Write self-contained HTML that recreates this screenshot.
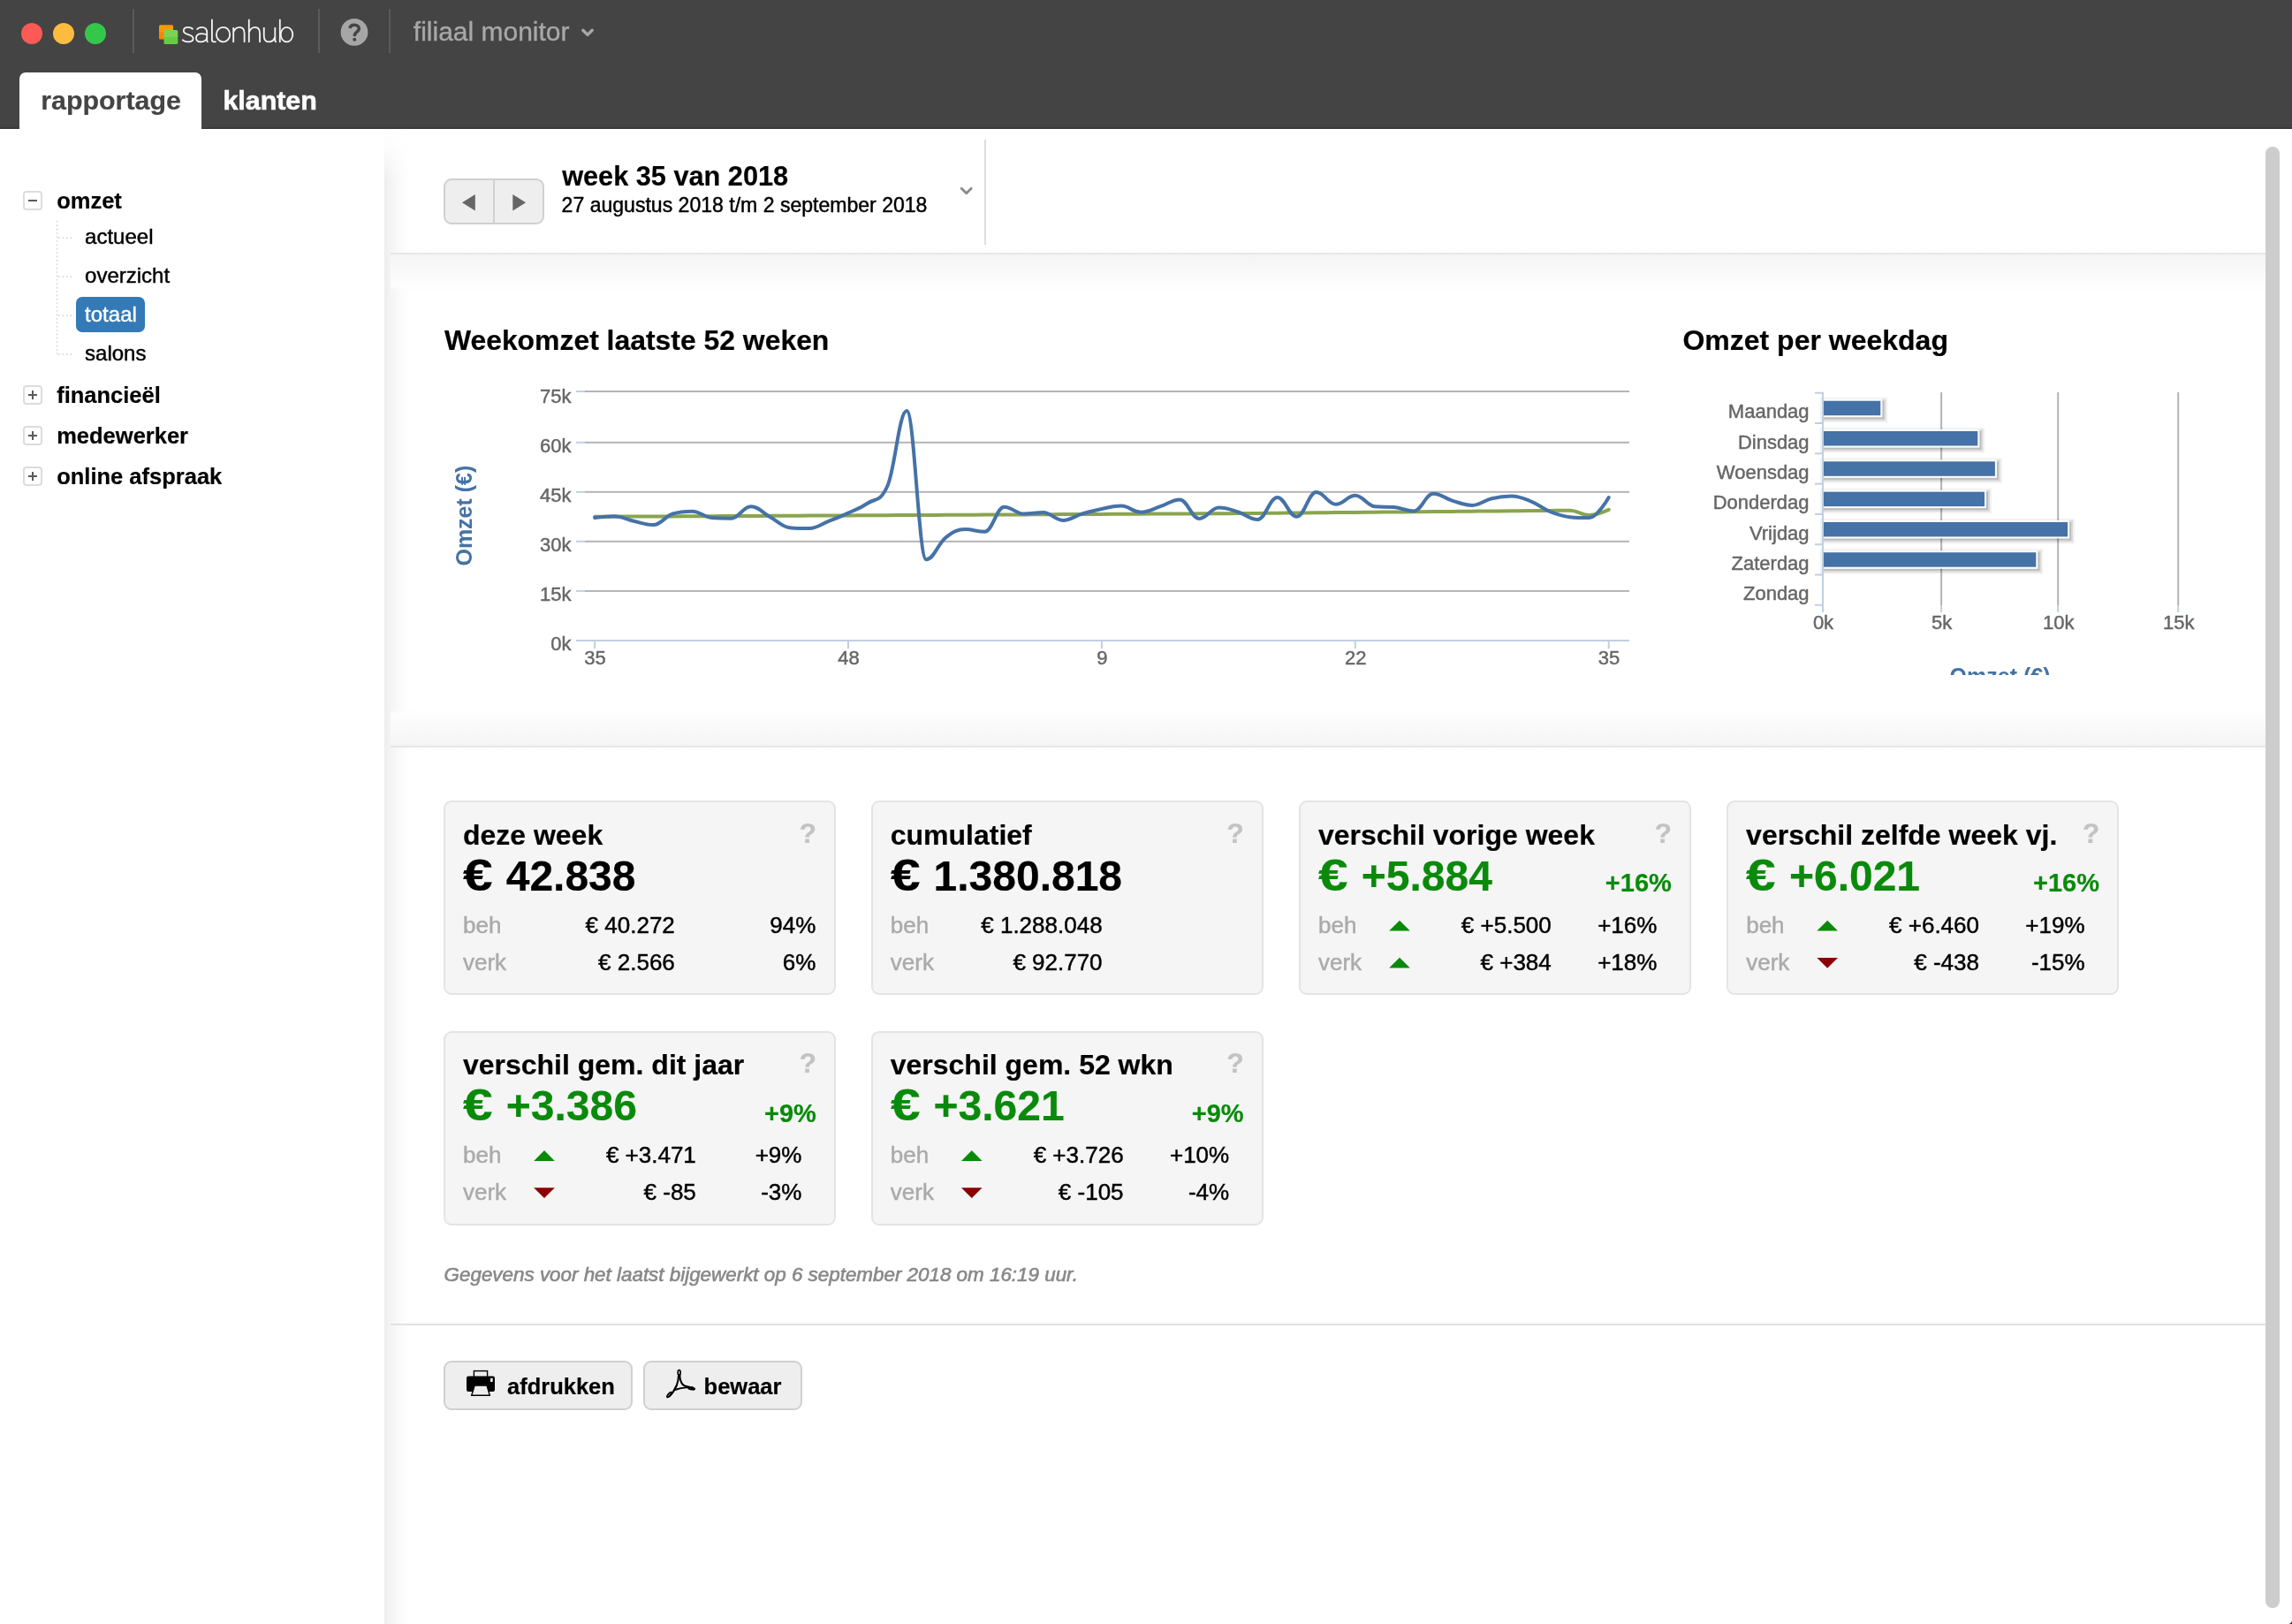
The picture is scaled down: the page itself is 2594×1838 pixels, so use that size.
<!DOCTYPE html>
<html lang="nl"><head><meta charset="utf-8"><title>salonhub - filiaal monitor</title>
<style>
html,body{margin:0;padding:0;}
body{width:2594px;height:1838px;position:relative;overflow:hidden;background:#fff;font-family:"Liberation Sans", sans-serif;}
.t{position:absolute;white-space:nowrap;margin:0;padding:0;}
svg{position:absolute;left:0;top:0;overflow:visible;}
svg text{font-family:"Liberation Sans", sans-serif;}
.card{position:absolute;width:440px;height:216px;background:#f5f5f5;border:2px solid #e4e4e4;border-radius:9px;}
.btn{position:absolute;background:#eee;border:2px solid #d0d0d0;border-radius:9px;box-sizing:border-box;}
#all{position:absolute;left:0;top:0;width:2594px;height:1838px;will-change:transform;}
</style></head><body><div id="all">
<div style="position:absolute;left:0px;top:0px;width:2594px;height:146px;background:#444;"></div>
<div style="position:absolute;left:0px;top:144px;width:2594px;height:2px;background:#3b3b3b;"></div>
<div style="position:absolute;left:24px;top:26px;width:24px;height:24px;border-radius:50%;background:#fd5956;"></div>
<div style="position:absolute;left:60px;top:26px;width:24px;height:24px;border-radius:50%;background:#fdbc40;"></div>
<div style="position:absolute;left:96px;top:26px;width:24px;height:24px;border-radius:50%;background:#34c84a;"></div>
<div style="position:absolute;left:150px;top:10px;width:2px;height:50px;background:#5a5a5a;"></div>
<div style="position:absolute;left:360px;top:10px;width:2px;height:50px;background:#5a5a5a;"></div>
<div style="position:absolute;left:440px;top:10px;width:2px;height:50px;background:#5a5a5a;"></div>
<svg width="2594" height="146" viewBox="0 0 2594 146">
<defs><linearGradient id="og" x1="0" y1="0" x2="0" y2="1"><stop offset="0" stop-color="#ff9a05"/><stop offset=".5" stop-color="#ff9a05"/><stop offset=".5" stop-color="#ff8500"/><stop offset="1" stop-color="#ff8500"/></linearGradient>
<linearGradient id="gg" x1="0" y1="0" x2="0" y2="1"><stop offset="0" stop-color="#7bd354"/><stop offset=".5" stop-color="#7bd354"/><stop offset=".5" stop-color="#66cc44"/><stop offset="1" stop-color="#66cc44"/></linearGradient></defs>
<rect x="180" y="28.2" width="16" height="16.4" rx="1.6" fill="url(#og)"/>
<rect x="185.5" y="34" width="15.8" height="16" rx="1.6" fill="url(#gg)"/>
<g fill="none" stroke="#f4f4f4" stroke-width="1.8" stroke-linecap="butt" stroke-linejoin="round">
<path d="M218.4,33.3 C217.2,31.6 215.2,30.8 212.8,30.8 C209.8,30.8 207.8,32.4 207.8,34.8 C207.8,37.4 210,38.3 213,39.2 C216.4,40.2 218.6,41.2 218.6,43.6 C218.6,46 216.2,47.4 213,47.4 C210,47.4 207.6,46.4 206.3,44.8"/>
<path d="M222.6,33.5 C224,31.8 226,30.8 228.4,30.8 C232,30.8 234.2,33 234.2,36.6 V46 C234.2,47 234.7,47.4 235.6,47.4"/>
<path d="M234.2,39.6 C232.6,38.6 230.6,38.1 228.4,38.1 C224.6,38.1 222,40 222,43 C222,45.8 224.2,47.4 227.2,47.4 C230.6,47.4 234.2,45.4 234.2,42.2"/>
<path d="M239.9,21.8 V45 C239.9,46.8 240.8,47.4 242.4,47.4 C243.2,47.4 244,47.3 244.6,47.1"/>
<ellipse cx="252.55" cy="39.1" rx="7.65" ry="8.3"/>
<path d="M264.2,30.9 V48.05 M264.2,36.4 C265.4,33 268,30.8 271.2,30.8 C274.8,30.8 276.6,33.4 276.6,37.8 V48.05"/>
<path d="M281.8,21.8 V48.05 M281.8,36.8 C283,33.2 285.6,30.8 288.8,30.8 C292.4,30.8 294.05,33.4 294.05,37.8 V48.05"/>
<path d="M298.75,30.9 V40.6 C298.75,44.8 300.6,47.4 304.2,47.4 C307.6,47.4 310.2,45 311.3,41.6 M311.3,30.9 V45.8 C311.3,46.9 311.9,47.4 312.9,47.4"/>
<path d="M316.8,21.8 V48.05"/><ellipse cx="324.5" cy="39.1" rx="6.8" ry="8.3"/>
</g>
<circle cx="401" cy="36.4" r="15.4" fill="#a6a6a6"/>
<path d="M396,31.9 C396.3,29.6 398.4,28.3 401,28.3 C404.2,28.3 406.3,30 406.3,32.3 C406.3,34.2 405.2,35.3 403.6,36.4 C402,37.5 401.3,38.5 401.3,41" fill="none" stroke="#444" stroke-width="3.5"/>
<circle cx="401.25" cy="44.7" r="2" fill="#444"/>
<path d="M659.8,34.2 L665,39.4 L670.2,34.2" fill="none" stroke="#a8a8a8" stroke-width="3.4" stroke-linecap="round" stroke-linejoin="round"/>
</svg>
<div class="t" style="left:467.80px;top:21px;font-size:30px;line-height:30px;font-weight:normal;color:#a8a8a8;font-style:normal;-webkit-text-stroke:.35px #a8a8a8;">filiaal monitor</div>
<div style="position:absolute;left:22px;top:82px;width:206px;height:66px;background:#fff;border-radius:7px 7px 0 0;"></div>
<div class="t" style="left:46.20px;top:98px;font-size:30.4px;line-height:31px;font-weight:bold;color:#444;font-style:normal;-webkit-text-stroke:.2px;">rapportage</div>
<div class="t" style="left:252.40px;top:98px;font-size:30.4px;line-height:31px;font-weight:bold;color:#fff;font-style:normal;-webkit-text-stroke:.6px;">klanten</div>
<div style="position:absolute;left:26px;top:216.3px;width:17.5px;height:17.5px;border:2px solid #dcdcdc;border-radius:4px;background:#fff;"></div>
<div style="position:absolute;left:31.5px;top:226.3px;width:10.5px;height:1.5px;background:#5a5a5a;"></div>
<div class="t" style="left:64.20px;top:214px;font-size:25.5px;line-height:26px;font-weight:bold;color:#000;font-style:normal;-webkit-text-stroke:.2px;">omzet</div>
<div style="position:absolute;left:26px;top:436.3px;width:17.5px;height:17.5px;border:2px solid #dcdcdc;border-radius:4px;background:#fff;"></div>
<div style="position:absolute;left:31.5px;top:446.3px;width:10.5px;height:1.5px;background:#5a5a5a;"></div>
<div style="position:absolute;left:36.0px;top:441.8px;width:1.5px;height:10.5px;background:#5a5a5a;"></div>
<div class="t" style="left:64.20px;top:434px;font-size:25.5px;line-height:26px;font-weight:bold;color:#000;font-style:normal;-webkit-text-stroke:.2px;">financieël</div>
<div style="position:absolute;left:26px;top:482px;width:17.5px;height:17.5px;border:2px solid #dcdcdc;border-radius:4px;background:#fff;"></div>
<div style="position:absolute;left:31.5px;top:492.0px;width:10.5px;height:1.5px;background:#5a5a5a;"></div>
<div style="position:absolute;left:36.0px;top:487.5px;width:1.5px;height:10.5px;background:#5a5a5a;"></div>
<div class="t" style="left:64.20px;top:480px;font-size:25.5px;line-height:26px;font-weight:bold;color:#000;font-style:normal;-webkit-text-stroke:.2px;">medewerker</div>
<div style="position:absolute;left:26px;top:528.1px;width:17.5px;height:17.5px;border:2px solid #dcdcdc;border-radius:4px;background:#fff;"></div>
<div style="position:absolute;left:31.5px;top:538.1px;width:10.5px;height:1.5px;background:#5a5a5a;"></div>
<div style="position:absolute;left:36.0px;top:533.6px;width:1.5px;height:10.5px;background:#5a5a5a;"></div>
<div class="t" style="left:64.20px;top:526px;font-size:25.5px;line-height:26px;font-weight:bold;color:#000;font-style:normal;-webkit-text-stroke:.2px;">online afspraak</div>
<svg width="440" height="600" viewBox="0 0 440 600"><g stroke="#cfcfcf" stroke-width="1.4" stroke-dasharray="1.6 2.8" fill="none">
<path d="M64.5,250 V401"/>
<path d="M66.2,269.2 H82.5"/>
<path d="M66.2,313.2 H82.5"/>
<path d="M66.2,357.2 H82.5"/>
<path d="M66.2,401 H82.5"/>
</g></svg>
<div style="position:absolute;left:86px;top:336px;width:78px;height:40px;background:#337ab7;border-radius:7px;"></div>
<div class="t" style="left:96.10px;top:256px;font-size:24px;line-height:24px;font-weight:normal;color:#000;font-style:normal;-webkit-text-stroke:.45px;">actueel</div>
<div class="t" style="left:96.10px;top:300px;font-size:24px;line-height:24px;font-weight:normal;color:#000;font-style:normal;-webkit-text-stroke:.45px;">overzicht</div>
<div class="t" style="left:96.10px;top:344px;font-size:24px;line-height:24px;font-weight:normal;color:#fff;font-style:normal;-webkit-text-stroke:.4px #fff;">totaal</div>
<div class="t" style="left:96.10px;top:388px;font-size:24px;line-height:24px;font-weight:normal;color:#000;font-style:normal;-webkit-text-stroke:.45px;">salons</div>
<div style="position:absolute;left:435px;top:146px;width:30px;height:1692px;background:linear-gradient(to right,#ededed 0,#f3f3f3 20%,#f9f9f9 50%,#fdfdfd 80%,#fff 100%);"></div>
<div style="position:absolute;left:435px;top:146px;width:30px;height:60px;background:linear-gradient(to bottom,#fff 0,rgba(255,255,255,.85) 30%,rgba(255,255,255,0) 100%);"></div>
<div style="position:absolute;left:442px;top:288px;width:2122px;height:556px;background:linear-gradient(to bottom,#f4f4f4 0,#f9f9f9 18px,#fdfdfd 34px,rgba(255,255,255,0) 42px,rgba(255,255,255,0) 514px,#fdfdfd 522px,#f9f9f9 538px,#f4f4f4 556px);"></div>
<div style="position:absolute;left:442px;top:286px;width:2122px;height:2px;background:#e6e6e6;"></div>
<div style="position:absolute;left:442px;top:844px;width:2122px;height:2px;background:#e6e6e6;"></div>
<div style="position:absolute;left:442px;top:1498px;width:2122px;height:2px;background:#e2e2e2;"></div>
<div style="position:absolute;left:502px;top:202px;width:113.5px;height:52px;background:#eee;border:2px solid #d0d0d0;border-radius:9px;box-sizing:border-box;"></div>
<div style="position:absolute;left:558px;top:204px;width:2px;height:48px;background:#d0d0d0;"></div>
<svg width="2594" height="300" viewBox="0 0 2594 300">
<path d="M537.8,220 V238.4 L523,229.2 Z" fill="#666"/>
<path d="M580.3,220 V238.4 L595.1,229.2 Z" fill="#666"/>
<path d="M1088.2,213.2 L1093.7,218.7 L1099.2,213.2" fill="none" stroke="#8a8a8a" stroke-width="2.8" stroke-linecap="round" stroke-linejoin="round"/>
</svg>
<div class="t" style="left:636.20px;top:184px;font-size:30.7px;line-height:31px;font-weight:bold;color:#000;font-style:normal;-webkit-text-stroke:.2px;">week 35 van 2018</div>
<div class="t" style="left:635.60px;top:220px;font-size:23.05px;line-height:24px;font-weight:normal;color:#000;font-style:normal;-webkit-text-stroke:.45px;">27 augustus 2018 t/m 2 september 2018</div>
<div style="position:absolute;left:1114px;top:158px;width:2px;height:119px;background:#dedede;"></div>
<div class="t" style="left:502.90px;top:369px;font-size:31.9px;line-height:32px;font-weight:bold;color:#000;font-style:normal;-webkit-text-stroke:.2px;">Weekomzet laatste 52 weken</div>
<div class="t" style="left:1904.40px;top:369px;font-size:32px;line-height:32px;font-weight:bold;color:#000;font-style:normal;-webkit-text-stroke:.2px;">Omzet per weekdag</div>
<svg width="2594" height="1838" viewBox="0 0 2594 1838">
<rect x="662" y="442.0" width="1182" height="2" fill="#b4b4b4"/>
<rect x="652" y="442.0" width="10" height="2" fill="#c0d0e0"/>
<rect x="662" y="499.8" width="1182" height="2" fill="#b4b4b4"/>
<rect x="652" y="499.8" width="10" height="2" fill="#c0d0e0"/>
<rect x="662" y="555.8" width="1182" height="2" fill="#b4b4b4"/>
<rect x="652" y="555.8" width="10" height="2" fill="#c0d0e0"/>
<rect x="662" y="611.8" width="1182" height="2" fill="#b4b4b4"/>
<rect x="652" y="611.8" width="10" height="2" fill="#c0d0e0"/>
<rect x="662" y="667.9" width="1182" height="2" fill="#b4b4b4"/>
<rect x="652" y="667.9" width="10" height="2" fill="#c0d0e0"/>
<rect x="652" y="724" width="1192" height="2" fill="#c0d0e0"/>
<rect x="672.1" y="726" width="2" height="8" fill="#c0d0e0"/>
<rect x="959.0" y="726" width="2" height="8" fill="#c0d0e0"/>
<rect x="1245.9" y="726" width="2" height="8" fill="#c0d0e0"/>
<rect x="1532.8" y="726" width="2" height="8" fill="#c0d0e0"/>
<rect x="1819.7" y="726" width="2" height="8" fill="#c0d0e0"/>
<path d="M673.1,584.8 C673.1,584.8 686.3,584.7 695.2,584.7 C704.0,584.6 708.4,584.6 717.2,584.6 C726.1,584.5 730.5,584.5 739.3,584.5 C748.1,584.4 752.6,584.4 761.4,584.4 C770.2,584.3 774.6,584.3 783.5,584.3 C792.3,584.2 796.7,584.2 805.5,584.2 C814.3,584.1 818.8,584.1 827.6,584.0 C836.4,584.0 840.8,584.0 849.7,583.9 C858.5,583.9 862.9,583.9 871.7,583.8 C880.6,583.8 885.0,583.8 893.8,583.7 C902.6,583.7 907.0,583.7 915.9,583.6 C924.7,583.6 929.1,583.6 937.9,583.5 C946.8,583.5 951.2,583.4 960.0,583.4 C968.8,583.4 973.3,583.3 982.1,583.3 C990.9,583.2 995.3,583.2 1004.2,583.2 C1013.0,583.1 1017.4,583.1 1026.2,583.1 C1035.0,583.0 1039.5,583.0 1048.3,582.9 C1057.1,582.9 1061.5,582.9 1070.4,582.8 C1079.2,582.8 1083.6,582.8 1092.4,582.7 C1101.3,582.7 1105.7,582.6 1114.5,582.6 C1123.3,582.5 1127.7,582.5 1136.6,582.5 C1145.4,582.4 1149.8,582.4 1158.6,582.4 C1167.5,582.3 1171.9,582.3 1180.7,582.2 C1189.5,582.2 1194.0,582.2 1202.8,582.1 C1211.6,582.1 1216.0,582.1 1224.8,582.0 C1233.7,582.0 1238.1,581.9 1246.9,581.9 C1255.7,581.9 1260.2,581.8 1269.0,581.8 C1277.8,581.7 1282.2,581.7 1291.1,581.7 C1299.9,581.6 1304.3,581.6 1313.1,581.6 C1322.0,581.5 1326.4,581.5 1335.2,581.4 C1344.0,581.4 1348.4,581.4 1357.3,581.3 C1366.1,581.3 1370.5,581.3 1379.3,581.2 C1388.2,581.2 1392.6,581.2 1401.4,581.1 C1410.2,581.0 1414.7,581.0 1423.5,580.9 C1432.3,580.8 1436.7,580.8 1445.6,580.7 C1454.4,580.6 1458.8,580.6 1467.6,580.5 C1476.4,580.4 1480.9,580.4 1489.7,580.3 C1498.5,580.2 1502.9,580.2 1511.8,580.1 C1520.6,580.0 1525.0,580.0 1533.8,579.9 C1542.7,579.8 1547.1,579.8 1555.9,579.7 C1564.7,579.6 1569.1,579.6 1578.0,579.5 C1586.8,579.4 1591.2,579.4 1600.0,579.3 C1608.9,579.2 1613.3,579.1 1622.1,579.1 C1630.9,579.0 1635.4,578.9 1644.2,578.9 C1653.0,578.8 1657.4,578.7 1666.2,578.7 C1675.1,578.6 1679.5,578.5 1688.3,578.5 C1697.1,578.4 1701.6,578.3 1710.4,578.3 C1719.2,578.2 1723.6,578.1 1732.5,578.1 C1741.3,578.0 1745.7,577.9 1754.5,577.9 C1763.4,577.8 1767.8,577.7 1776.6,577.7 C1785.4,577.7 1789.8,583.0 1798.7,583.0 C1807.5,583.0 1820.7,576.9 1820.7,576.9" fill="none" stroke="#89a54e" stroke-width="4" stroke-linejoin="round" stroke-linecap="round"/>
<path d="M673.1,586.1 C673.1,586.1 686.3,584.3 695.2,584.3 C704.0,584.3 708.4,587.8 717.2,589.8 C726.1,591.8 730.5,594.1 739.3,594.1 C748.1,594.1 752.6,584.3 761.4,581.5 C770.2,578.7 774.6,578.7 783.5,578.7 C792.3,578.7 796.7,585.5 805.5,586.1 C814.3,586.7 818.8,586.7 827.6,586.7 C836.4,586.7 840.8,573.2 849.7,573.2 C858.5,573.2 862.9,580.4 871.7,585.2 C880.6,590.0 885.0,596.3 893.8,597.2 C902.6,598.1 907.0,598.1 915.9,598.1 C924.7,598.1 929.1,593.3 937.9,589.8 C946.8,586.3 951.2,584.7 960.0,580.6 C968.8,576.5 973.3,575.5 982.1,569.5 C990.9,563.5 995.3,569.5 1004.2,550.5 C1013.0,531.5 1017.4,465.1 1026.2,465.1 C1035.0,465.1 1039.5,633.2 1048.3,633.2 C1057.1,633.2 1061.5,615.1 1070.4,608.3 C1079.2,601.5 1083.6,599.1 1092.4,599.1 C1101.3,599.1 1105.7,601.8 1114.5,601.8 C1123.3,601.8 1127.7,573.7 1136.6,573.7 C1145.4,573.7 1149.8,581.5 1158.6,581.5 C1167.5,581.5 1171.9,580.0 1180.7,580.0 C1189.5,580.0 1194.0,588.9 1202.8,588.9 C1211.6,588.9 1216.0,584.1 1224.8,581.5 C1233.7,578.9 1238.1,577.8 1246.9,576.0 C1255.7,574.2 1260.2,572.6 1269.0,572.6 C1277.8,572.6 1282.2,579.7 1291.1,579.7 C1299.9,579.7 1304.3,576.1 1313.1,573.2 C1322.0,570.3 1326.4,565.4 1335.2,565.4 C1344.0,565.4 1348.4,587.0 1357.3,587.0 C1366.1,587.0 1370.5,574.6 1379.3,574.6 C1388.2,574.6 1392.6,576.8 1401.4,579.5 C1410.2,582.2 1414.7,588.0 1423.5,588.0 C1432.3,588.0 1436.7,563.0 1445.6,563.0 C1454.4,563.0 1458.8,584.8 1467.6,584.8 C1476.4,584.8 1480.9,557.1 1489.7,557.1 C1498.5,557.1 1502.9,570.8 1511.8,570.8 C1520.6,570.8 1525.0,560.8 1533.8,560.8 C1542.7,560.8 1547.1,572.3 1555.9,573.2 C1564.7,574.1 1569.1,573.2 1578.0,574.1 C1586.8,575.0 1591.2,578.4 1600.0,578.4 C1608.9,578.4 1613.3,558.8 1622.1,558.8 C1630.9,558.8 1635.4,564.2 1644.2,566.8 C1653.0,569.4 1657.4,571.9 1666.2,571.9 C1675.1,571.9 1679.5,566.3 1688.3,564.2 C1697.1,562.1 1701.6,561.6 1710.4,561.6 C1719.2,561.6 1723.6,563.8 1732.5,567.3 C1741.3,570.8 1745.7,575.6 1754.5,579.2 C1763.4,582.8 1767.8,584.3 1776.6,585.2 C1785.4,586.1 1789.8,586.1 1798.7,586.1 C1807.5,586.1 1820.7,563.0 1820.7,563.0" fill="none" stroke="#4572a7" stroke-width="4" stroke-linejoin="round" stroke-linecap="round"/>
<text x="646.4" y="456.0" text-anchor="end" font-size="22" fill="#666" stroke="#666" stroke-width=".45">75k</text>
<text x="646.4" y="512.0" text-anchor="end" font-size="22" fill="#666" stroke="#666" stroke-width=".45">60k</text>
<text x="646.4" y="568.0" text-anchor="end" font-size="22" fill="#666" stroke="#666" stroke-width=".45">45k</text>
<text x="646.4" y="624.0" text-anchor="end" font-size="22" fill="#666" stroke="#666" stroke-width=".45">30k</text>
<text x="646.4" y="680.0" text-anchor="end" font-size="22" fill="#666" stroke="#666" stroke-width=".45">15k</text>
<text x="646.4" y="736.0" text-anchor="end" font-size="22" fill="#666" stroke="#666" stroke-width=".45">0k</text>
<text x="673.5" y="752.2" text-anchor="middle" font-size="22" fill="#666" stroke="#666" stroke-width=".45">35</text>
<text x="960.4" y="752.2" text-anchor="middle" font-size="22" fill="#666" stroke="#666" stroke-width=".45">48</text>
<text x="1247.3" y="752.2" text-anchor="middle" font-size="22" fill="#666" stroke="#666" stroke-width=".45">9</text>
<text x="1534.2" y="752.2" text-anchor="middle" font-size="22" fill="#666" stroke="#666" stroke-width=".45">22</text>
<text x="1821.1" y="752.2" text-anchor="middle" font-size="22" fill="#666" stroke="#666" stroke-width=".45">35</text>
<text transform="translate(533.8,583.6) rotate(-90)" text-anchor="middle" font-size="25" font-weight="bold" fill="#4572a7">Omzet (€)</text>
<rect x="2054" y="443.7" width="9" height="2" fill="#c0d0e0"/>
<rect x="2054" y="478.0" width="9" height="2" fill="#c0d0e0"/>
<rect x="2054" y="512.3" width="9" height="2" fill="#c0d0e0"/>
<rect x="2054" y="546.6" width="9" height="2" fill="#c0d0e0"/>
<rect x="2054" y="580.9" width="9" height="2" fill="#c0d0e0"/>
<rect x="2054" y="615.2" width="9" height="2" fill="#c0d0e0"/>
<rect x="2054" y="649.5" width="9" height="2" fill="#c0d0e0"/>
<rect x="2054" y="683.8" width="9" height="2" fill="#c0d0e0"/>
<rect x="2196.1" y="444" width="2" height="241" fill="#b4b4b4"/>
<rect x="2196.1" y="685" width="2" height="8" fill="#c0d0e0"/>
<rect x="2328.2" y="444" width="2" height="241" fill="#b4b4b4"/>
<rect x="2328.2" y="685" width="2" height="8" fill="#c0d0e0"/>
<rect x="2464.2" y="444" width="2" height="241" fill="#b4b4b4"/>
<rect x="2464.2" y="685" width="2" height="8" fill="#c0d0e0"/>
<rect x="2062" y="685" width="2" height="8" fill="#c0d0e0"/>
<rect x="2065" y="454.7" width="66.3" height="18.5" fill="none" stroke="#000" stroke-opacity="0.05" stroke-width="10"/>
<rect x="2065" y="454.7" width="66.3" height="18.5" fill="none" stroke="#000" stroke-opacity="0.1" stroke-width="6"/>
<rect x="2065" y="454.7" width="66.3" height="18.5" fill="none" stroke="#000" stroke-opacity="0.15" stroke-width="2"/>
<rect x="2063" y="452.7" width="66.3" height="18.5" fill="#4572a7" stroke="#fff" stroke-width="2"/>
<rect x="2065" y="489.0" width="176.3" height="18.5" fill="none" stroke="#000" stroke-opacity="0.05" stroke-width="10"/>
<rect x="2065" y="489.0" width="176.3" height="18.5" fill="none" stroke="#000" stroke-opacity="0.1" stroke-width="6"/>
<rect x="2065" y="489.0" width="176.3" height="18.5" fill="none" stroke="#000" stroke-opacity="0.15" stroke-width="2"/>
<rect x="2063" y="487.0" width="176.3" height="18.5" fill="#4572a7" stroke="#fff" stroke-width="2"/>
<rect x="2065" y="523.3" width="195.9" height="18.5" fill="none" stroke="#000" stroke-opacity="0.05" stroke-width="10"/>
<rect x="2065" y="523.3" width="195.9" height="18.5" fill="none" stroke="#000" stroke-opacity="0.1" stroke-width="6"/>
<rect x="2065" y="523.3" width="195.9" height="18.5" fill="none" stroke="#000" stroke-opacity="0.15" stroke-width="2"/>
<rect x="2063" y="521.3" width="195.9" height="18.5" fill="#4572a7" stroke="#fff" stroke-width="2"/>
<rect x="2065" y="557.6" width="184.0" height="18.5" fill="none" stroke="#000" stroke-opacity="0.05" stroke-width="10"/>
<rect x="2065" y="557.6" width="184.0" height="18.5" fill="none" stroke="#000" stroke-opacity="0.1" stroke-width="6"/>
<rect x="2065" y="557.6" width="184.0" height="18.5" fill="none" stroke="#000" stroke-opacity="0.15" stroke-width="2"/>
<rect x="2063" y="555.6" width="184.0" height="18.5" fill="#4572a7" stroke="#fff" stroke-width="2"/>
<rect x="2065" y="591.9" width="278.1" height="18.5" fill="none" stroke="#000" stroke-opacity="0.05" stroke-width="10"/>
<rect x="2065" y="591.9" width="278.1" height="18.5" fill="none" stroke="#000" stroke-opacity="0.1" stroke-width="6"/>
<rect x="2065" y="591.9" width="278.1" height="18.5" fill="none" stroke="#000" stroke-opacity="0.15" stroke-width="2"/>
<rect x="2063" y="589.9" width="278.1" height="18.5" fill="#4572a7" stroke="#fff" stroke-width="2"/>
<rect x="2065" y="626.2" width="242.3" height="18.5" fill="none" stroke="#000" stroke-opacity="0.05" stroke-width="10"/>
<rect x="2065" y="626.2" width="242.3" height="18.5" fill="none" stroke="#000" stroke-opacity="0.1" stroke-width="6"/>
<rect x="2065" y="626.2" width="242.3" height="18.5" fill="none" stroke="#000" stroke-opacity="0.15" stroke-width="2"/>
<rect x="2063" y="624.2" width="242.3" height="18.5" fill="#4572a7" stroke="#fff" stroke-width="2"/>
<rect x="2062" y="444" width="2" height="241" fill="#c0d0e0"/>
<text x="2047.6" y="473.4" text-anchor="end" font-size="22" fill="#666" stroke="#666" stroke-width=".45">Maandag</text>
<text x="2047.6" y="507.7" text-anchor="end" font-size="22" fill="#666" stroke="#666" stroke-width=".45">Dinsdag</text>
<text x="2047.6" y="542.0" text-anchor="end" font-size="22" fill="#666" stroke="#666" stroke-width=".45">Woensdag</text>
<text x="2047.6" y="576.3" text-anchor="end" font-size="22" fill="#666" stroke="#666" stroke-width=".45">Donderdag</text>
<text x="2047.6" y="610.6" text-anchor="end" font-size="22" fill="#666" stroke="#666" stroke-width=".45">Vrijdag</text>
<text x="2047.6" y="644.9" text-anchor="end" font-size="22" fill="#666" stroke="#666" stroke-width=".45">Zaterdag</text>
<text x="2047.6" y="679.2" text-anchor="end" font-size="22" fill="#666" stroke="#666" stroke-width=".45">Zondag</text>
<text x="2063.5" y="711.8" text-anchor="middle" font-size="22" fill="#666" stroke="#666" stroke-width=".45">0k</text>
<text x="2197.6" y="711.8" text-anchor="middle" font-size="22" fill="#666" stroke="#666" stroke-width=".45">5k</text>
<text x="2329.7" y="711.8" text-anchor="middle" font-size="22" fill="#666" stroke="#666" stroke-width=".45">10k</text>
<text x="2465.7" y="711.8" text-anchor="middle" font-size="22" fill="#666" stroke="#666" stroke-width=".45">15k</text>
<clipPath id="cl"><rect x="1900" y="740" width="660" height="24"/></clipPath>
<text x="2263.5" y="773.5" text-anchor="middle" font-size="25" font-weight="bold" fill="#4572a7" clip-path="url(#cl)">Omzet (€)</text>
</svg>
<div class="card" style="left:502.2px;top:906.3px;"></div>
<div class="t" style="left:523.90px;top:929px;font-size:32px;line-height:32px;font-weight:bold;color:#000;font-style:normal;-webkit-text-stroke:.2px;">deze week</div>
<div class="t" style="left:-276.00px;width:1200px;text-align:right;top:927px;font-size:32px;line-height:32px;font-weight:bold;color:#c3c3c3;font-style:normal;-webkit-text-stroke:.2px;">?</div>
<div class="t" style="left:524.20px;top:968px;font-size:48px;line-height:48px;font-weight:bold;color:#000;font-style:normal;-webkit-text-stroke:.2px;"><span style="display:inline-block;width:.733em;"><span style="display:inline-block;transform:scale(1.26,1.06);transform-origin:0 82%;">€</span></span> 42.838</div>
<div class="t" style="left:524.00px;top:1034px;font-size:26px;line-height:26px;font-weight:normal;color:#aaa;font-style:normal;-webkit-text-stroke:.45px;">beh</div>
<div class="t" style="left:-436.20px;width:1200px;text-align:right;top:1034px;font-size:26px;line-height:26px;font-weight:normal;color:#000;font-style:normal;-webkit-text-stroke:.45px;">€ 40.272</div>
<div class="t" style="left:-276.60px;width:1200px;text-align:right;top:1034px;font-size:26px;line-height:26px;font-weight:normal;color:#000;font-style:normal;-webkit-text-stroke:.45px;">94%</div>
<div class="t" style="left:524.00px;top:1076px;font-size:26px;line-height:26px;font-weight:normal;color:#aaa;font-style:normal;-webkit-text-stroke:.45px;">verk</div>
<div class="t" style="left:-436.20px;width:1200px;text-align:right;top:1076px;font-size:26px;line-height:26px;font-weight:normal;color:#000;font-style:normal;-webkit-text-stroke:.45px;">€ 2.566</div>
<div class="t" style="left:-276.60px;width:1200px;text-align:right;top:1076px;font-size:26px;line-height:26px;font-weight:normal;color:#000;font-style:normal;-webkit-text-stroke:.45px;">6%</div>
<div class="card" style="left:986.0px;top:906.3px;"></div>
<div class="t" style="left:1007.70px;top:929px;font-size:32px;line-height:32px;font-weight:bold;color:#000;font-style:normal;-webkit-text-stroke:.2px;">cumulatief</div>
<div class="t" style="left:207.80px;width:1200px;text-align:right;top:927px;font-size:32px;line-height:32px;font-weight:bold;color:#c3c3c3;font-style:normal;-webkit-text-stroke:.2px;">?</div>
<div class="t" style="left:1008.00px;top:968px;font-size:48px;line-height:48px;font-weight:bold;color:#000;font-style:normal;-webkit-text-stroke:.2px;"><span style="display:inline-block;width:.733em;"><span style="display:inline-block;transform:scale(1.26,1.06);transform-origin:0 82%;">€</span></span> 1.380.818</div>
<div class="t" style="left:1007.80px;top:1034px;font-size:26px;line-height:26px;font-weight:normal;color:#aaa;font-style:normal;-webkit-text-stroke:.45px;">beh</div>
<div class="t" style="left:47.60px;width:1200px;text-align:right;top:1034px;font-size:26px;line-height:26px;font-weight:normal;color:#000;font-style:normal;-webkit-text-stroke:.45px;">€ 1.288.048</div>
<div class="t" style="left:1007.80px;top:1076px;font-size:26px;line-height:26px;font-weight:normal;color:#aaa;font-style:normal;-webkit-text-stroke:.45px;">verk</div>
<div class="t" style="left:47.60px;width:1200px;text-align:right;top:1076px;font-size:26px;line-height:26px;font-weight:normal;color:#000;font-style:normal;-webkit-text-stroke:.45px;">€ 92.770</div>
<div class="card" style="left:1470.2px;top:906.3px;"></div>
<div class="t" style="left:1491.90px;top:929px;font-size:32px;line-height:32px;font-weight:bold;color:#000;font-style:normal;-webkit-text-stroke:.2px;">verschil vorige week</div>
<div class="t" style="left:692.00px;width:1200px;text-align:right;top:927px;font-size:32px;line-height:32px;font-weight:bold;color:#c3c3c3;font-style:normal;-webkit-text-stroke:.2px;">?</div>
<div class="t" style="left:1492.20px;top:968px;font-size:48px;line-height:48px;font-weight:bold;color:#0a8a0a;font-style:normal;-webkit-text-stroke:.2px;"><span style="display:inline-block;width:.733em;"><span style="display:inline-block;transform:scale(1.26,1.06);transform-origin:0 82%;">€</span></span> +5.884</div>
<div class="t" style="left:691.80px;width:1200px;text-align:right;top:985px;font-size:29px;line-height:29px;font-weight:bold;color:#0a8a0a;font-style:normal;-webkit-text-stroke:.2px;">+16%</div>
<div class="t" style="left:1492.00px;top:1034px;font-size:26px;line-height:26px;font-weight:normal;color:#aaa;font-style:normal;-webkit-text-stroke:.45px;">beh</div>
<div class="t" style="left:555.80px;width:1200px;text-align:right;top:1034px;font-size:26px;line-height:26px;font-weight:normal;color:#000;font-style:normal;-webkit-text-stroke:.45px;">€ +5.500</div>
<div class="t" style="left:675.40px;width:1200px;text-align:right;top:1034px;font-size:26px;line-height:26px;font-weight:normal;color:#000;font-style:normal;-webkit-text-stroke:.45px;">+16%</div>
<svg width="2594" height="1838"><path d="M1572.2,1053.6 L1595.8,1053.6 L1584.0,1041.8 Z" fill="#0a8a0a"/></svg>
<div class="t" style="left:1492.00px;top:1076px;font-size:26px;line-height:26px;font-weight:normal;color:#aaa;font-style:normal;-webkit-text-stroke:.45px;">verk</div>
<div class="t" style="left:555.80px;width:1200px;text-align:right;top:1076px;font-size:26px;line-height:26px;font-weight:normal;color:#000;font-style:normal;-webkit-text-stroke:.45px;">€ +384</div>
<div class="t" style="left:675.40px;width:1200px;text-align:right;top:1076px;font-size:26px;line-height:26px;font-weight:normal;color:#000;font-style:normal;-webkit-text-stroke:.45px;">+18%</div>
<svg width="2594" height="1838"><path d="M1572.2,1095.6 L1595.8,1095.6 L1584.0,1083.8 Z" fill="#0a8a0a"/></svg>
<div class="card" style="left:1954.4px;top:906.3px;"></div>
<div class="t" style="left:1976.10px;top:929px;font-size:32px;line-height:32px;font-weight:bold;color:#000;font-style:normal;-webkit-text-stroke:.2px;">verschil zelfde week vj.</div>
<div class="t" style="left:1176.20px;width:1200px;text-align:right;top:927px;font-size:32px;line-height:32px;font-weight:bold;color:#c3c3c3;font-style:normal;-webkit-text-stroke:.2px;">?</div>
<div class="t" style="left:1976.40px;top:968px;font-size:48px;line-height:48px;font-weight:bold;color:#0a8a0a;font-style:normal;-webkit-text-stroke:.2px;"><span style="display:inline-block;width:.733em;"><span style="display:inline-block;transform:scale(1.26,1.06);transform-origin:0 82%;">€</span></span> +6.021</div>
<div class="t" style="left:1176.00px;width:1200px;text-align:right;top:985px;font-size:29px;line-height:29px;font-weight:bold;color:#0a8a0a;font-style:normal;-webkit-text-stroke:.2px;">+16%</div>
<div class="t" style="left:1976.20px;top:1034px;font-size:26px;line-height:26px;font-weight:normal;color:#aaa;font-style:normal;-webkit-text-stroke:.45px;">beh</div>
<div class="t" style="left:1040.00px;width:1200px;text-align:right;top:1034px;font-size:26px;line-height:26px;font-weight:normal;color:#000;font-style:normal;-webkit-text-stroke:.45px;">€ +6.460</div>
<div class="t" style="left:1159.60px;width:1200px;text-align:right;top:1034px;font-size:26px;line-height:26px;font-weight:normal;color:#000;font-style:normal;-webkit-text-stroke:.45px;">+19%</div>
<svg width="2594" height="1838"><path d="M2056.4,1053.6 L2080.0,1053.6 L2068.2,1041.8 Z" fill="#0a8a0a"/></svg>
<div class="t" style="left:1976.20px;top:1076px;font-size:26px;line-height:26px;font-weight:normal;color:#aaa;font-style:normal;-webkit-text-stroke:.45px;">verk</div>
<div class="t" style="left:1040.00px;width:1200px;text-align:right;top:1076px;font-size:26px;line-height:26px;font-weight:normal;color:#000;font-style:normal;-webkit-text-stroke:.45px;">€ -438</div>
<div class="t" style="left:1159.60px;width:1200px;text-align:right;top:1076px;font-size:26px;line-height:26px;font-weight:normal;color:#000;font-style:normal;-webkit-text-stroke:.45px;">-15%</div>
<svg width="2594" height="1838"><path d="M2056.4,1083.9 L2080.0,1083.9 L2068.2,1095.7 Z" fill="#8b0000"/></svg>
<div class="card" style="left:502.2px;top:1166.6px;"></div>
<div class="t" style="left:523.90px;top:1189px;font-size:32px;line-height:32px;font-weight:bold;color:#000;font-style:normal;-webkit-text-stroke:.2px;">verschil gem. dit jaar</div>
<div class="t" style="left:-276.00px;width:1200px;text-align:right;top:1187px;font-size:32px;line-height:32px;font-weight:bold;color:#c3c3c3;font-style:normal;-webkit-text-stroke:.2px;">?</div>
<div class="t" style="left:524.20px;top:1228px;font-size:48px;line-height:48px;font-weight:bold;color:#0a8a0a;font-style:normal;-webkit-text-stroke:.2px;"><span style="display:inline-block;width:.733em;"><span style="display:inline-block;transform:scale(1.26,1.06);transform-origin:0 82%;">€</span></span> +3.386</div>
<div class="t" style="left:-276.20px;width:1200px;text-align:right;top:1246px;font-size:29px;line-height:29px;font-weight:bold;color:#0a8a0a;font-style:normal;-webkit-text-stroke:.2px;">+9%</div>
<div class="t" style="left:524.00px;top:1294px;font-size:26px;line-height:26px;font-weight:normal;color:#aaa;font-style:normal;-webkit-text-stroke:.45px;">beh</div>
<div class="t" style="left:-412.20px;width:1200px;text-align:right;top:1294px;font-size:26px;line-height:26px;font-weight:normal;color:#000;font-style:normal;-webkit-text-stroke:.45px;">€ +3.471</div>
<div class="t" style="left:-292.60px;width:1200px;text-align:right;top:1294px;font-size:26px;line-height:26px;font-weight:normal;color:#000;font-style:normal;-webkit-text-stroke:.45px;">+9%</div>
<svg width="2594" height="1838"><path d="M604.2,1313.9 L627.8,1313.9 L616.0,1302.1 Z" fill="#0a8a0a"/></svg>
<div class="t" style="left:524.00px;top:1336px;font-size:26px;line-height:26px;font-weight:normal;color:#aaa;font-style:normal;-webkit-text-stroke:.45px;">verk</div>
<div class="t" style="left:-412.20px;width:1200px;text-align:right;top:1336px;font-size:26px;line-height:26px;font-weight:normal;color:#000;font-style:normal;-webkit-text-stroke:.45px;">€ -85</div>
<div class="t" style="left:-292.60px;width:1200px;text-align:right;top:1336px;font-size:26px;line-height:26px;font-weight:normal;color:#000;font-style:normal;-webkit-text-stroke:.45px;">-3%</div>
<svg width="2594" height="1838"><path d="M604.2,1344.2 L627.8,1344.2 L616.0,1356.0 Z" fill="#8b0000"/></svg>
<div class="card" style="left:986.0px;top:1166.6px;"></div>
<div class="t" style="left:1007.70px;top:1189px;font-size:32px;line-height:32px;font-weight:bold;color:#000;font-style:normal;-webkit-text-stroke:.2px;">verschil gem. 52 wkn</div>
<div class="t" style="left:207.80px;width:1200px;text-align:right;top:1187px;font-size:32px;line-height:32px;font-weight:bold;color:#c3c3c3;font-style:normal;-webkit-text-stroke:.2px;">?</div>
<div class="t" style="left:1008.00px;top:1228px;font-size:48px;line-height:48px;font-weight:bold;color:#0a8a0a;font-style:normal;-webkit-text-stroke:.2px;"><span style="display:inline-block;width:.733em;"><span style="display:inline-block;transform:scale(1.26,1.06);transform-origin:0 82%;">€</span></span> +3.621</div>
<div class="t" style="left:207.60px;width:1200px;text-align:right;top:1246px;font-size:29px;line-height:29px;font-weight:bold;color:#0a8a0a;font-style:normal;-webkit-text-stroke:.2px;">+9%</div>
<div class="t" style="left:1007.80px;top:1294px;font-size:26px;line-height:26px;font-weight:normal;color:#aaa;font-style:normal;-webkit-text-stroke:.45px;">beh</div>
<div class="t" style="left:71.60px;width:1200px;text-align:right;top:1294px;font-size:26px;line-height:26px;font-weight:normal;color:#000;font-style:normal;-webkit-text-stroke:.45px;">€ +3.726</div>
<div class="t" style="left:191.20px;width:1200px;text-align:right;top:1294px;font-size:26px;line-height:26px;font-weight:normal;color:#000;font-style:normal;-webkit-text-stroke:.45px;">+10%</div>
<svg width="2594" height="1838"><path d="M1088.0,1313.9 L1111.6,1313.9 L1099.8,1302.1 Z" fill="#0a8a0a"/></svg>
<div class="t" style="left:1007.80px;top:1336px;font-size:26px;line-height:26px;font-weight:normal;color:#aaa;font-style:normal;-webkit-text-stroke:.45px;">verk</div>
<div class="t" style="left:71.60px;width:1200px;text-align:right;top:1336px;font-size:26px;line-height:26px;font-weight:normal;color:#000;font-style:normal;-webkit-text-stroke:.45px;">€ -105</div>
<div class="t" style="left:191.20px;width:1200px;text-align:right;top:1336px;font-size:26px;line-height:26px;font-weight:normal;color:#000;font-style:normal;-webkit-text-stroke:.45px;">-4%</div>
<svg width="2594" height="1838"><path d="M1088.0,1344.2 L1111.6,1344.2 L1099.8,1356.0 Z" fill="#8b0000"/></svg>
<div class="t" style="left:502.60px;top:1431px;font-size:22.4px;line-height:23px;font-weight:normal;color:#888;font-style:italic;-webkit-text-stroke:.6px;">Gegevens voor het laatst bijgewerkt op 6 september 2018 om 16:19 uur.</div>
<div class="btn" style="left:502px;top:1540px;width:213.5px;height:55.5px;"></div>
<div class="btn" style="left:728px;top:1540px;width:180px;height:55.5px;"></div>
<div class="t" style="left:574.00px;top:1556px;font-size:25.5px;line-height:26px;font-weight:bold;color:#000;font-style:normal;-webkit-text-stroke:.2px;">afdrukken</div>
<div class="t" style="left:796.60px;top:1556px;font-size:25.5px;line-height:26px;font-weight:bold;color:#000;font-style:normal;-webkit-text-stroke:.2px;">bewaar</div>
<svg width="2594" height="1838" viewBox="0 0 2594 1838">
<rect x="536.4" y="1551.6" width="15.2" height="8" fill="#eee" stroke="#000" stroke-width="1.4"/>
<rect x="528" y="1557.4" width="32" height="17.6" rx="2.2" fill="#000"/>
<rect x="555" y="1559.8" width="2.6" height="4.2" rx=".5" fill="#eee"/>
<path d="M537.2,1568 H551 L554.3,1579.2 H533.7 Z" fill="#eee" stroke="#000" stroke-width="1.4" stroke-linejoin="miter"/>
<g fill="none" stroke="#000" stroke-linecap="round" stroke-linejoin="round">
<path d="M768.1,1556 C768,1560 767.5,1563 766,1567.5 C764,1572.5 761,1577 757.6,1580.2" stroke-width="2.1"/>
<path d="M769.3,1556 C769.3,1560 770,1563.5 772.5,1566.8 C775,1569.5 779,1570 784,1570.6" stroke-width="2.1"/>
<path d="M763.8,1573 C768,1571.4 773,1570.2 778,1570.4 C781,1570.6 783,1571.6 785,1572.4" stroke-width="1.9"/>
<ellipse cx="768.65" cy="1553.4" rx="1.45" ry="2.9" stroke-width="1.7"/>
<ellipse cx="0" cy="0" rx="3.7" ry="1.25" stroke-width="1.7" transform="translate(757.5,1578.5) rotate(-48)"/>
<ellipse cx="0" cy="0" rx="3.6" ry="1.15" stroke-width="1.7" transform="translate(782.7,1571.4) rotate(8)"/>
</g>
</svg>
<div style="position:absolute;left:2564.3px;top:165.8px;width:15.6px;height:1654.4px;background:#cdcdcd;border-radius:8px;"></div>
<div style="position:absolute;left:2591px;top:1835px;width:3px;height:3px;background:radial-gradient(circle at 0 0,rgba(30,30,30,0) 1.8px,#222 3.2px);"></div>
</div></body></html>
